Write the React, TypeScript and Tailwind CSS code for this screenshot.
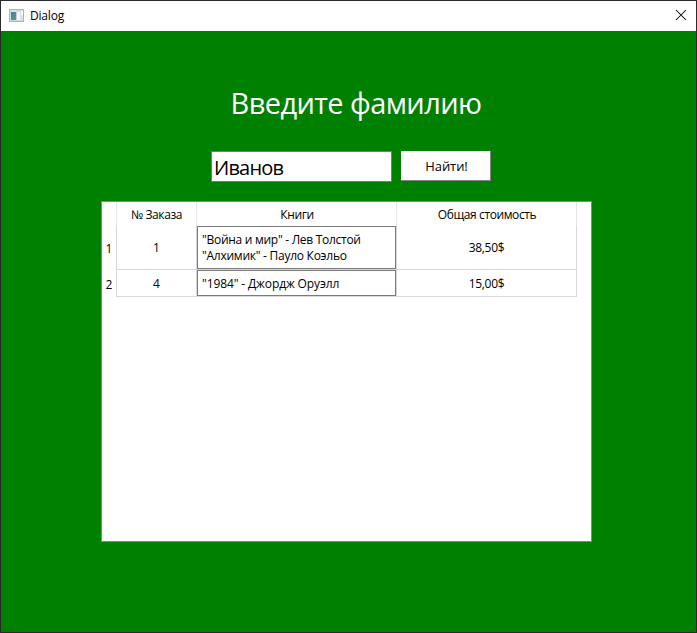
import React from "react";

const rows = [
  {
    id: 1,
    order: "1",
    books: [
      { title: '"Война и мир" - Лев Толстой', tracking: "tracking-[-0.28px]" },
      { title: '"Алхимик" - Пауло Коэльо', tracking: "tracking-[-0.26px]" },
    ],
    total: "38,50$",
  },
  {
    id: 2,
    order: "4",
    books: [{ title: '"1984" - Джордж Оруэлл', tracking: "tracking-[-0.12px] pt-px" }],
    total: "15,00$",
  },
];

function WindowIcon() {
  return (
    <svg className="mb-px block" width="15" height="13" viewBox="0 0 15 13" shapeRendering="crispEdges">
      <defs>
        <linearGradient id="pane" x1="0" y1="0" x2="1" y2="1">
          <stop offset="0" stopColor="#4779ad" />
          <stop offset="1" stopColor="#4fa573" />
        </linearGradient>
      </defs>
      <rect width="15" height="13" fill="#b0b2b5" />
      <rect x="1" y="1" width="13" height="11" fill="#d9dce0" />
      <rect x="2" y="3" width="5" height="8" fill="url(#pane)" />
      <rect x="7" y="3" width="1" height="8" fill="#b9cfdc" />
      <rect x="8" y="3" width="3" height="8" fill="#f7f7f8" />
      <rect x="12" y="2" width="2" height="4" fill="#ffffff" />
      <rect x="12" y="6" width="2" height="5" fill="#e3e5e7" />
    </svg>
  );
}

export default function App() {
  return (
    <div className="flex h-[633px] w-[697px] flex-col border border-[#2b292b] bg-[#008000] font-['Open_Sans','Noto_Sans',sans-serif] text-[12px] text-black">
      <header className="flex h-[30px] shrink-0 items-center bg-white pl-2">
        <WindowIcon />
        <span className="ml-[6px] text-[12px] leading-4 tracking-[-0.2px]">Dialog</span>
        <svg className="mr-[9px] mb-[2px] ml-auto" width="12" height="12" viewBox="0 0 12 12" stroke="#000" strokeWidth="1.05">
          <path d="M1 1 11 11M11 1 1 11" />
        </svg>
      </header>

      <main className="flex flex-col pl-[100px]">
        <h1 className="mt-[52px] w-[510px] text-center text-[29px] leading-10 tracking-[-0.6px] whitespace-nowrap text-white">
          Введите фамилию
        </h1>

        <div className="mt-[28px] ml-[110px] flex h-[31px] items-start gap-[9px]">
          <div className="flex h-[31px] w-[181px] items-center border border-[#7a7a7a] bg-white pt-[2px] pl-[2px] text-[20px] leading-7 tracking-[-0.8px]">
            <span>Иванов</span>
          </div>
          <button className="h-[30px] w-[90px] border-r border-b border-[#848484] bg-white pt-[3px] pl-[2px] text-[13px] tracking-[-0.1px]">
            Найти!
          </button>
        </div>

        <section className="mt-[19px] h-[341px] w-[491px] border border-[#828790] bg-white">
          <div className="grid h-[24px] grid-cols-[15px_80px_200px_180px] text-center leading-[25px] tracking-[-0.4px]">
            <div className="border-r border-[#e5e5e5]" />
            <div className="border-r border-[#e5e5e5]"><span>№ Заказа</span></div>
            <div className="border-r border-[#e5e5e5] pl-px"><span>Книги</span></div>
            <div className="border-r border-[#e5e5e5] pl-px"><span>Общая стоимость</span></div>
          </div>
          {rows.map((row) => (
            <div
              key={row.id}
              className={`grid grid-cols-[15px_80px_200px_180px] text-center ${row.id === 1 ? "h-[44px] leading-[42px]" : "h-[27px] leading-[25px]"}`}
            >
              <div className={`border-r border-[#d8d8d8] ${row.id === 1 ? "pt-[2px]" : "pt-[2px]"}`}><span>{row.id}</span></div>
              <div className="border-r border-b border-[#d8d8d8] pt-px"><span>{row.order}</span></div>
              <div className="border-r border-b border-[#d8d8d8]">
                <div className="flex h-full flex-col justify-center border border-[#7a7a7a] pl-1 text-left leading-4 whitespace-nowrap">
                  {row.books.map((book) => (
                    <div key={book.title} className={book.tracking}><span>{book.title}</span></div>
                  ))}
                </div>
              </div>
              <div className="border-r border-b border-[#d8d8d8] pt-px tracking-[-0.35px]"><span>{row.total}</span></div>
            </div>
          ))}
        </section>
      </main>
    </div>
  );
}
